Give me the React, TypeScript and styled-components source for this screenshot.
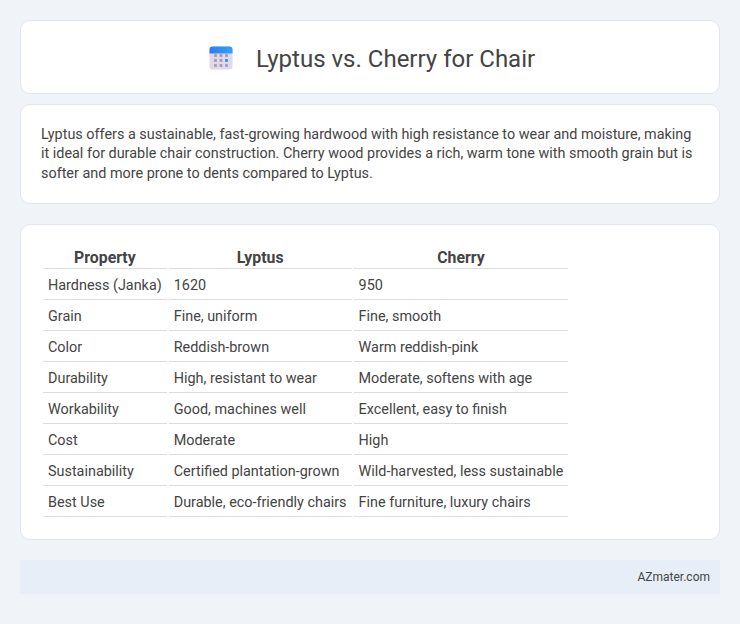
import React from "react";
import styled, { createGlobalStyle } from "styled-components";

const Global = createGlobalStyle`
  body {
    margin: 0;
    background-color: #f0f4f9;
    font-family: Roboto, "Liberation Sans", sans-serif;
    color: #444;
  }
`;

const Page = styled.div`
  padding: 20px;
  display: flex;
  flex-direction: column;
`;

const Card = styled.div`
  background-color: #fff;
  border: 1px solid #e1e5ee;
  border-radius: 10px;
`;

const TitleCard = styled(Card)`
  height: 70px;
  margin-bottom: 10px;
  padding: 2px 0 0 4px;
  display: flex;
  align-items: center;
  justify-content: center;
  gap: 23px;
`;

const Title = styled.h1`
  margin: 0;
  font-size: 24px;
  font-weight: 400;
  line-height: 28px;
  padding-top: 2px;
  color: #444;
`;

const Intro = styled(Card)`
  padding: 20px;
  margin-bottom: 20px;
  font-size: 14.4px;
  line-height: 19.44px;
`;

const TableCard = styled(Card)`
  padding: 20px;
  margin-bottom: 20px;
`;

const Table = styled.table`
  border-spacing: 2px;
  font-size: 14.4px;
`;

const Th = styled.th`
  font-size: 15.84px;
  font-weight: 700;
  padding: 1px 5px 0;
  line-height: 20px;
  border-bottom: 1px solid #ddd;
  text-align: center;
`;

const Td = styled.td`
  padding: 6px 5px 4px;
  line-height: 18px;
  border-bottom: 1px solid #ddd;
  white-space: nowrap;
`;

const Footer = styled.div`
  height: 34px;
  background-color: #e8eef8;
  display: flex;
  align-items: center;
  justify-content: flex-end;
  padding-right: 10px;
  font-size: 12px;
`;

const rows = [
  ["Hardness (Janka)", "1620", "950"],
  ["Grain", "Fine, uniform", "Fine, smooth"],
  ["Color", "Reddish-brown", "Warm reddish-pink"],
  ["Durability", "High, resistant to wear", "Moderate, softens with age"],
  ["Workability", "Good, machines well", "Excellent, easy to finish"],
  ["Cost", "Moderate", "High"],
  ["Sustainability", "Certified plantation-grown", "Wild-harvested, less sustainable"],
  ["Best Use", "Durable, eco-friendly chairs", "Fine furniture, luxury chairs"],
];

const CalendarIcon = () => (
  <svg width="24" height="24" viewBox="0 0 24 24">
    <defs>
      <linearGradient id="calTop" x1="0" y1="0" x2="1" y2="0">
        <stop offset="0" stopColor="#2f7cf0" />
        <stop offset="1" stopColor="#35a0f5" />
      </linearGradient>
    </defs>
    <rect x="0.5" y="0.5" width="23" height="23" rx="3" fill="#e0d8ec" />
    <path d="M0.5 7.5V3.500A3 3 0 0 1 3.500 0.5h17A3 3 0 0 1 23.500 3.500V7.500z" fill="url(#calTop)" />
    {[6.5, 12, 17.5].map((x) =>
      [9.5, 14.5, 19.5].map((y) => (
        <rect
          key={`${x}-${y}`}
          x={x - 1.4}
          y={y - 1.4}
          width="2.8"
          height="2.8"
          fill={x === 17.5 && y === 14.5 ? "#2f8ff0" : "#a39cb0"}
        />
      ))
    )}
  </svg>
);

const App = () => (
  <Page>
    <Global />
    <TitleCard>
      <CalendarIcon />
      <Title>Lyptus vs. Cherry for Chair</Title>
    </TitleCard>
    <Intro>
      Lyptus offers a sustainable, fast-growing hardwood with high resistance to wear and moisture, making it ideal for
      durable chair construction. Cherry wood provides a rich, warm tone with smooth grain but is softer and more prone
      to dents compared to Lyptus.
    </Intro>
    <TableCard>
      <Table>
        <thead>
          <tr>
            <Th>Property</Th>
            <Th>Lyptus</Th>
            <Th>Cherry</Th>
          </tr>
        </thead>
        <tbody>
          {rows.map((row) => (
            <tr key={row[0]}>
              {row.map((cell) => (
                <Td key={cell}>{cell}</Td>
              ))}
            </tr>
          ))}
        </tbody>
      </Table>
    </TableCard>
    <Footer>AZmater.com</Footer>
  </Page>
);

export default App;
